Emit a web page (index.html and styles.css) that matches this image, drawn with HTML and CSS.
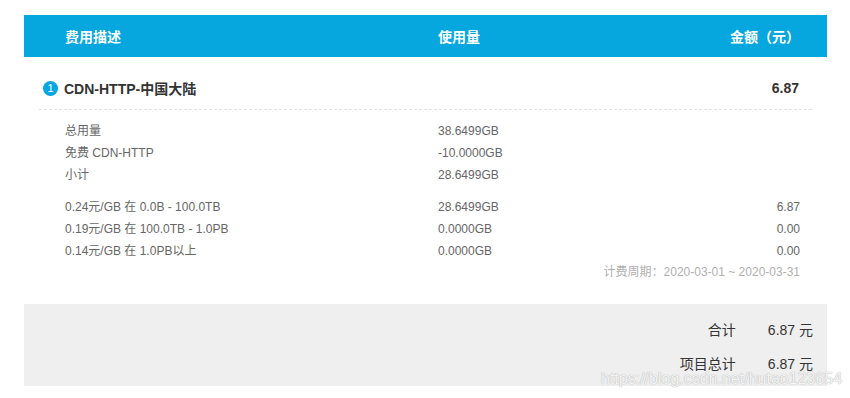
FILE: index.html
```html
<!DOCTYPE html>
<html lang="zh-CN">
<head>
<meta charset="utf-8">
<link rel="stylesheet" href="styles.css">
</head>
<body>
<div class="bill">
  <div class="head">
    <div>费用描述</div>
    <div>使用量</div>
    <div class="right">金额（元）</div>
  </div>
  <div class="item">
    <div class="item-head">
      <span class="num">1</span>
      <span class="title">CDN-HTTP-中国大陆</span>
      <span class="total">6.87</span>
    </div>
    <div class="rows">
      <div>总用量</div><div>38.6499GB</div><div></div>
      <div>免费 CDN-HTTP</div><div>-10.0000GB</div><div></div>
      <div>小计</div><div>28.6499GB</div><div></div>
    </div>
    <div class="rows">
      <div>0.24元/GB 在 0.0B - 100.0TB</div><div>28.6499GB</div><div class="right">6.87</div>
      <div>0.19元/GB 在 100.0TB - 1.0PB</div><div>0.0000GB</div><div class="right">0.00</div>
      <div>0.14元/GB 在 1.0PB以上</div><div>0.0000GB</div><div class="right">0.00</div>
    </div>
    <div class="period">计费周期：2020-03-01 ~ 2020-03-31</div>
  </div>
  <div class="summary">
    <div class="label">合计</div><div>6.87 元</div>
    <div class="label">项目总计</div><div>6.87 元</div>
  </div>
</div>
<div class="watermark">https://blog.csdn.net/hutao123654</div>
</body>
</html>
```
FILE: styles.css
```css
html, body {
  margin: 0;
  padding: 0;
  background: #fff;
}
body {
  font-family: "Liberation Sans", "Noto Sans CJK SC", sans-serif;
  position: relative;
  width: 850px;
  height: 398px;
  overflow: hidden;
}
.bill {
  margin: 15px 23px 0 24px;
}
.head {
  display: grid;
  grid-template-columns: 373px 1fr auto;
  align-items: center;
  height: 42px;
  padding: 0 27px 0 41px;
  background: #06a7df;
  color: #fff;
  font-weight: bold;
  font-size: 14px;
}
.right {
  text-align: right;
}
.item {
  margin: 0 15px;
}
.item-head {
  display: flex;
  align-items: center;
  height: 20px;
  padding: 21px 13px 11px 4px;
  border-bottom: 1px dashed #e2e2e2;
  font-size: 14px;
  font-weight: bold;
  color: #333;
}
.num {
  width: 15px;
  height: 15px;
  border-radius: 50%;
  background: #06a7df;
  color: #fff;
  font-size: 11px;
  font-weight: normal;
  line-height: 15px;
  text-align: center;
  margin-right: 6px;
}
.title {
  flex: 1;
}
.rows {
  display: grid;
  grid-template-columns: 373px 1fr auto;
  padding: 0 12px 0 26px;
  font-size: 12px;
  line-height: 22px;
  color: #666;
}
.item-head + .rows {
  padding-top: 10px;
}
.rows + .rows {
  padding-top: 10px;
}
.period {
  text-align: right;
  padding-right: 12px;
  font-size: 12px;
  line-height: 20px;
  color: #b0b0b0;
}
.summary {
  margin-top: 22px;
  background: #efefef;
  display: grid;
  grid-template-columns: auto auto;
  justify-content: end;
  column-gap: 32px;
  padding: 9px 14px 5px 0;
  font-size: 14px;
  line-height: 34px;
  color: #333;
}
.label {
  text-align: right;
}
.watermark {
  position: absolute;
  left: 601px;
  top: 370px;
  font-size: 16px;
  line-height: 18px;
  color: rgba(255, 255, 255, 0.85);
  text-shadow: 0 0 1px #b8b8b8, 0 0 1px #b8b8b8;
}
```
